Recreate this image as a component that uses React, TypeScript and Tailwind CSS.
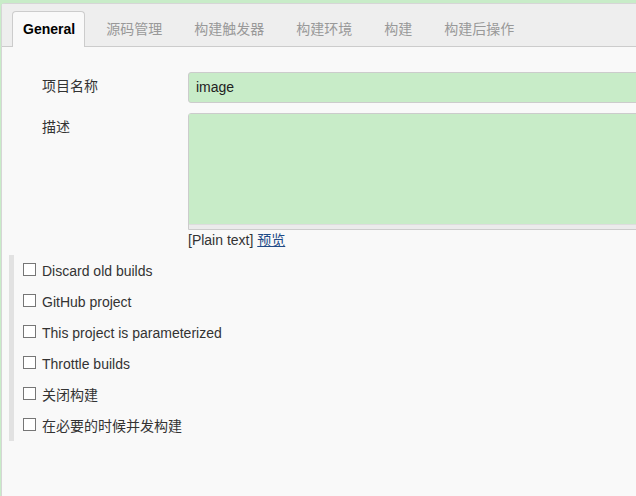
const tabs = ["源码管理", "构建触发器", "构建环境", "构建", "构建后操作"];

const options = [
  "Discard old builds",
  "GitHub project",
  "This project is parameterized",
  "Throttle builds",
  "关闭构建",
  "在必要的时候并发构建",
];

const font = {
  fontFamily: '"Liberation Sans", Arial, "Noto Sans CJK SC", sans-serif',
};

export default function App() {
  return (
    <div
      className="h-[496px] w-[636px] overflow-hidden bg-[#c8ecc8] pl-[1px] pt-[3px] text-[14px] text-[#333]"
      style={font}
    >
      <div className="h-full rounded-tl-[4px] border-l border-t border-[#d6d6d6] bg-[#f9f9f9]">
        {/* tab bar */}
        <div className="flex h-[43px] items-end gap-[10px] border-b border-[#cccccc] bg-[#eeeeee] pl-[10px]">
          <div className="-mb-px flex h-[36px] items-center rounded-t-[4px] border border-b-0 border-[#cccccc] bg-[#f9f9f9] pl-[10px] pr-[9px] font-bold text-black">
            General
          </div>
          {tabs.map((tab) => (
            <div
              key={tab}
              className="-mb-px flex h-[36px] items-center px-[11px] text-[#999999]"
            >
              {tab}
            </div>
          ))}
        </div>

        {/* form */}
        <div className="pl-[40px] pt-[25px]">
          <div className="flex">
            <div className="w-[146px] shrink-0 pt-[4px] leading-5">项目名称</div>
            <div className="h-[31px] flex-1 -mr-[10px] flex items-center rounded-[3px] border border-[#cccccc] bg-[#c8ecc8] px-[7px] text-[#222]">
              image
            </div>
          </div>
          <div className="mt-[10px] flex">
            <div className="w-[146px] shrink-0 pt-[4px] leading-5">描述</div>
            <div className="flex-1 -mr-[10px]">
              <div className="rounded-tl-[3px] border border-[#cccccc]">
                <div className="h-[110px] bg-[#c8ecc8]" />
                <div className="h-[5px] border-t border-[#dddddd] bg-[#ebebeb]" />
              </div>
              <div className="leading-5">
                [Plain text]{" "}
                <a href="#" className="text-[#204a87] underline">
                  预览
                </a>
              </div>
            </div>
          </div>
        </div>

        {/* checkboxes */}
        <div className="ml-[7px] mt-[5px] border-l-[5px] border-[#e2e2e2] pl-[9px]">
          {options.map((opt) => (
            <label key={opt} className="flex h-[31px] items-center gap-[6px]">
              <span className="mb-[3px] h-[13px] w-[13px] border border-[#767676] bg-white" />
              <span className="leading-5">{opt}</span>
            </label>
          ))}
        </div>
      </div>
    </div>
  );
}
